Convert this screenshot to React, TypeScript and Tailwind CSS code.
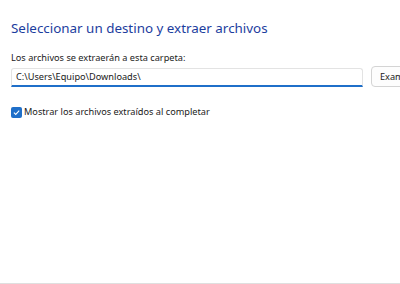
export default function App() {
  return (
    <div
      className="w-[400px] h-[284px] overflow-hidden bg-white flex flex-col"
      style={{ fontFamily: '"Noto Sans", "Open Sans", sans-serif' }}
    >
      <div className="flex-1 pl-[11px] pt-[18px]">
        {/* Main instruction */}
        <h1 className="text-[13.4px] leading-[20px] text-[#1c3d9e] whitespace-nowrap">
          Seleccionar un destino y extraer archivos
        </h1>

        {/* Destination */}
        <p className="mt-[14px] text-[9.2px] leading-[12px] text-[#1a1a1a] whitespace-nowrap">
          Los archivos se extraerán a esta carpeta:
        </p>
        <div className="mt-[2px] flex items-end gap-[8px]">
          <div className="w-[352px] shrink-0 h-[19px] border border-[#e3e3e3] border-b-2 border-b-[#1f6fc9] rounded-t-[3px] flex items-center pl-[4px]">
            <span className="text-[9.2px] leading-[12px] text-[#1a1a1a] whitespace-nowrap">
              C:\Users\Equipo\Downloads\
            </span>
          </div>
          <button className="h-[21px] w-[60px] shrink-0 border border-[#d4d4d4] rounded-[4px] bg-[#fdfdfd] text-left pl-[8px] text-[9.2px] leading-[12px] text-[#1a1a1a] whitespace-nowrap">
            Examinar...
          </button>
        </div>

        {/* Option */}
        <label className="mt-[19px] flex items-center">
          <span className="w-[11px] h-[11px] rounded-[2px] bg-[#1f6fc9] flex items-center justify-center">
            <svg width="9" height="9" viewBox="0 0 12 12" fill="none" stroke="white" strokeWidth="1.4">
              <path d="M2.5 6.2 5 8.6 9.6 3.6" />
            </svg>
          </span>
          <span className="ml-[2px] text-[9.2px] leading-[12px] text-[#1a1a1a] whitespace-nowrap">
            Mostrar los archivos extraídos al completar
          </span>
        </label>
      </div>
      <div className="h-px bg-[#dfdfdf]" />
    </div>
  );
}
